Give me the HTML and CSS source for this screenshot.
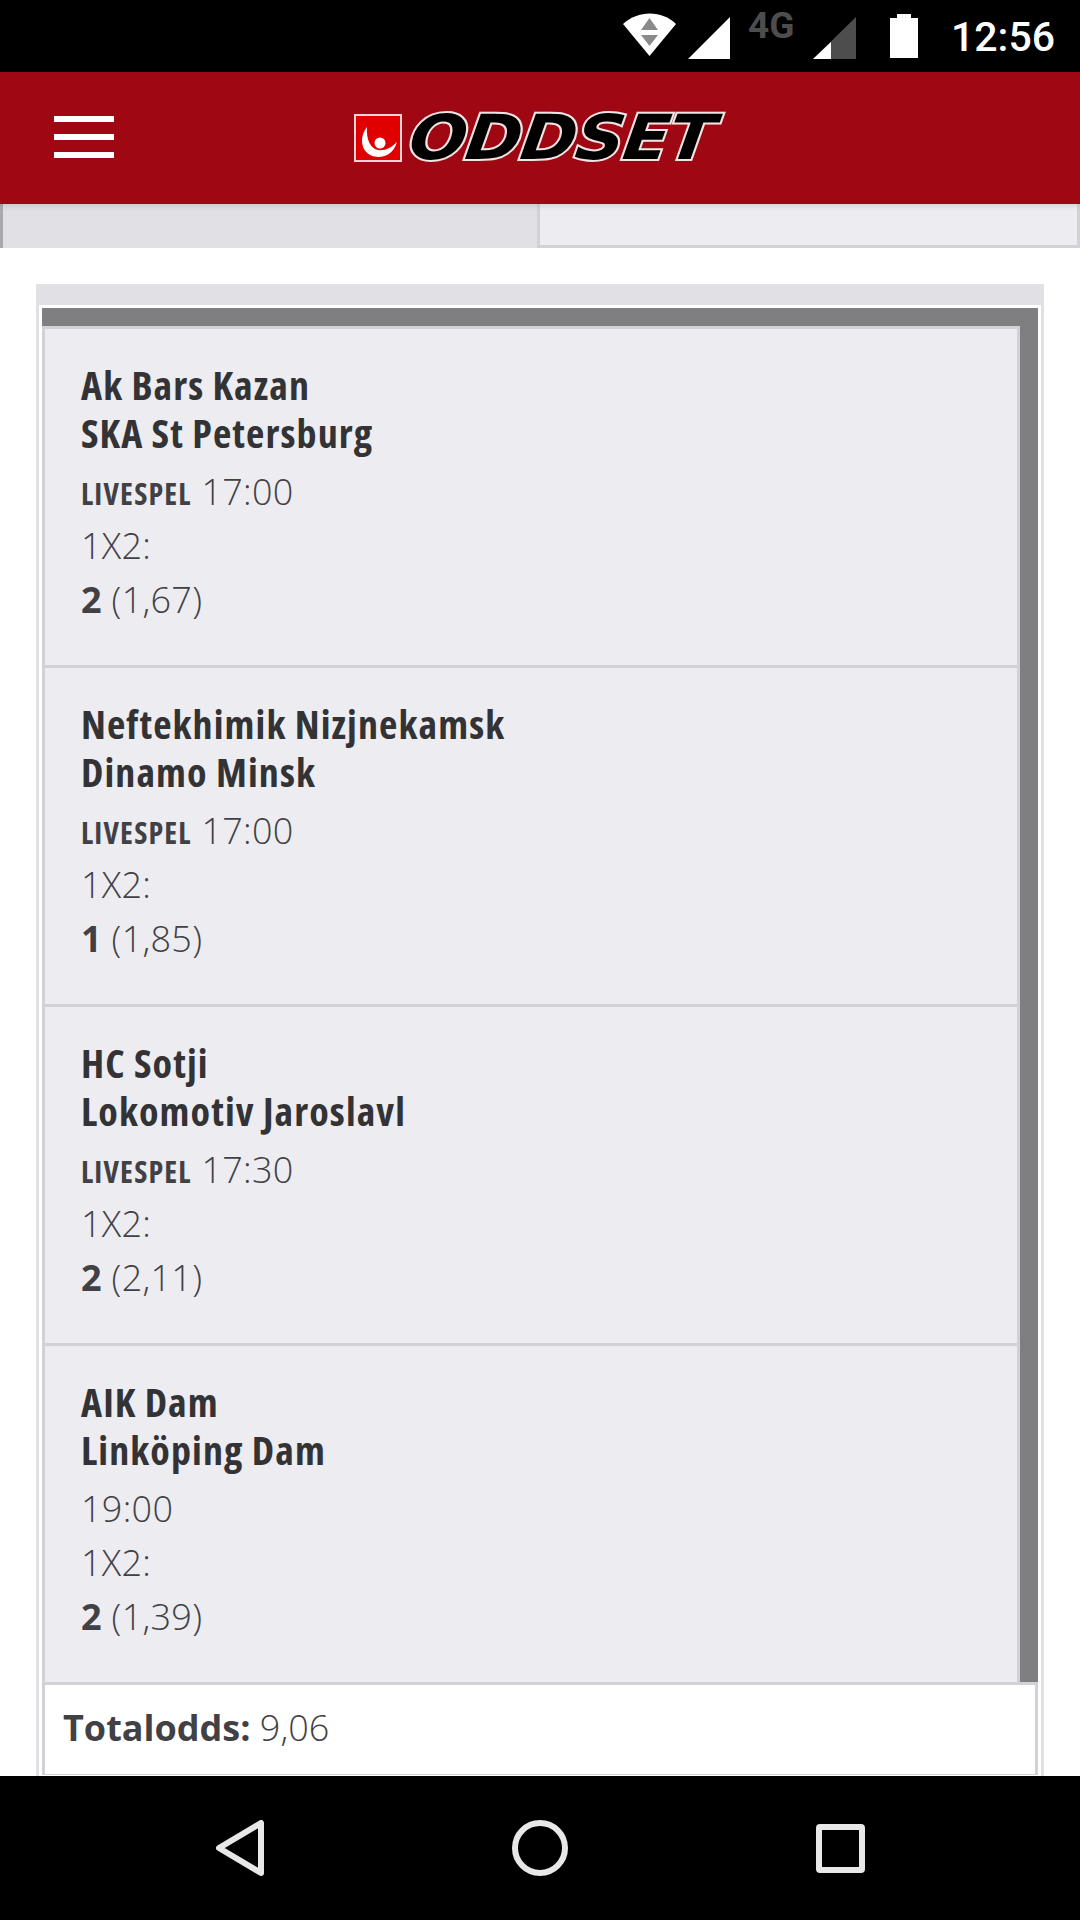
FILE: index.html
```html
<!DOCTYPE html>
<html lang="sv">
<head>
<meta charset="utf-8">
<title>Oddset</title>
<link rel="stylesheet" href="styles.css">
</head>
<body>
<div class="statusbar">
  <svg class="st-wifi" width="54" height="44" viewBox="0 0 54 44"><path d="M0 11C15-3 39-3 53 11L26.500 43Z" fill="#fff"/><path d="M26.500 5L35 17H18Z" fill="#8a8a8a"/><path d="M18 22H35L26.500 33Z" fill="#8a8a8a"/></svg>
  <svg class="st-sig1" width="42" height="42" viewBox="0 0 42 42"><path d="M42 0V42H0Z" fill="#fff"/></svg>
  <span class="st-net">4G</span>
  <svg class="st-sig2" width="43" height="42" viewBox="0 0 43 42"><path d="M43 0V42H0Z" fill="#4d4d4d"/><path d="M18 25V42H0Z" fill="#fff"/></svg>
  <svg class="st-batt" width="28" height="44" viewBox="0 0 28 44"><path d="M7 0H21V4H28V44H0V4H7Z" fill="#fff"/></svg>
  <span class="st-time">12:56</span>
</div>
<header class="appbar">
  <div class="burger"><i></i><i></i><i></i></div>
  <div class="logo">
    <svg class="logo-mark" width="48" height="48" viewBox="0 0 48 48"><rect x="1" y="1" width="46" height="46" fill="#e10000" stroke="#f3d5d5" stroke-width="2"/><path d="M13 13C4 24 7 42 24 43C33 43 40 38 43 28C37 34 31 37 24 36C17 35 12 26 13 13Z" fill="#fff"/><circle cx="26" cy="29" r="5.500" fill="#fff"/></svg>
    <span class="logo-word">ODDSET</span>
  </div>
</header>
<div class="tabs">
  <div class="tab tab-off"></div>
  <div class="tab tab-on"></div>
</div>
<main class="content">
  <section class="coupon">
    <div class="coupon-inner">
      <div class="bets">
        <article class="bet">
          <h2 class="teams">Ak Bars Kazan<br>SKA St Petersburg</h2>
          <p class="row"><b class="live">LIVESPEL</b> 17:00</p>
          <p class="row">1X2:</p>
          <p class="row"><b>2</b> (1,67)</p>
        </article>
        <article class="bet">
          <h2 class="teams">Neftekhimik Nizjnekamsk<br>Dinamo Minsk</h2>
          <p class="row"><b class="live">LIVESPEL</b> 17:00</p>
          <p class="row">1X2:</p>
          <p class="row"><b>1</b> (1,85)</p>
        </article>
        <article class="bet">
          <h2 class="teams">HC Sotji<br>Lokomotiv Jaroslavl</h2>
          <p class="row"><b class="live">LIVESPEL</b> 17:30</p>
          <p class="row">1X2:</p>
          <p class="row"><b>2</b> (2,11)</p>
        </article>
        <article class="bet">
          <h2 class="teams">AIK Dam<br>Linköping Dam</h2>
          <p class="row">19:00</p>
          <p class="row">1X2:</p>
          <p class="row"><b>2</b> (1,39)</p>
        </article>
      </div>
      <div class="total"><b>Totalodds:</b> 9,06</div>
    </div>
  </section>
</main>
<nav class="navbar">
  <svg width="48" height="56" viewBox="0 0 48 56"><path d="M45 3V53L3 28Z" fill="none" stroke="#e8e8e8" stroke-width="6" stroke-linejoin="round"/></svg>
  <svg width="56" height="56" viewBox="0 0 56 56"><circle cx="28" cy="28" r="25" fill="none" stroke="#e8e8e8" stroke-width="6"/></svg>
  <svg width="49" height="49" viewBox="0 0 49 49"><rect x="3" y="3" width="43" height="43" rx="1" fill="none" stroke="#e8e8e8" stroke-width="6"/></svg>
</nav>
</body>
</html>
```
FILE: styles.css
```css
* { box-sizing: border-box; }
html, body { margin: 0; padding: 0; }
body {
  width: 1080px;
  height: 1920px;
  overflow: hidden;
  display: flex;
  flex-direction: column;
  background: #fff;
  font-family: "Open Sans", sans-serif;
  color: #414145;
}
.statusbar {
  height: 72px;
  flex: none;
  background: #000;
  display: flex;
  align-items: flex-start;
  padding-left: 623px;
}
.st-wifi { margin-top: 13px; }
.st-sig1 { margin: 17px 0 0 11px; }
.st-net {
  margin: 4px 0 0 18px;
  width: 53px;
  font: 700 37px/44px Roboto, sans-serif;
  color: #4d4d4d;
}
.st-sig2 { margin: 17px 0 0 12px; }
.st-batt { margin: 14px 0 0 34px; }
.st-time {
  margin: 13px 0 0 33px;
  font: 500 41px/48px Roboto, sans-serif;
  color: #fff;
}
.appbar {
  height: 132px;
  flex: none;
  background: #9f0712;
  display: flex;
  align-items: center;
  padding-left: 354px;
  position: relative;
  z-index: 1;
  box-shadow: 0 2px 6px rgba(0,0,0,.12);
}
.burger {
  position: absolute;
  left: 54px;
  top: 44px;
  width: 60px;
  display: flex;
  flex-direction: column;
  gap: 12px;
}
.burger i { display: block; height: 6px; background: #fff; }
.logo { display: flex; align-items: center; gap: 8px; }
.logo-mark { flex: none; }
.logo-word {
  font: italic 700 62px/50px "DejaVu Sans", sans-serif;
  color: #000;
  -webkit-text-stroke: 4px #f2e4e4;
  paint-order: stroke fill;
  letter-spacing: -1px;
  display: inline-block;
  transform: skewX(-8deg) scaleX(1.09);
  transform-origin: left center;
  width: 315px;
}
.tabs { height: 44px; flex: none; display: flex; }
.tab-off { width: 537px; background: #e0e0e5; border-left: 3px solid #aaaaae; }
.tab-on { flex: 1; background: #edecf1; border: 3px solid #d2d2d6; border-top: 0; }
.content {
  flex: 1;
  min-height: 0;
  overflow: hidden;
  padding: 36px 36px 0;
}
.coupon {
  height: 100%;
  background: #fff;
  border: 3px solid #e0e0e5;
  border-top-width: 21px;
  border-bottom: 0;
  padding: 3px 3px 0;
}
.coupon-inner { height: 100%; }
.bets {
  background: #7f7f81;
  padding: 18px 18px 0 0;
}
.bet {
  height: 339px;
  background: #edecf1;
  border: 3px solid #d2d2d6;
  border-bottom: 0;
  padding: 32px 36px 0;
}
.teams {
  margin: 0 0 8px;
  font-stretch: condensed;
  font-weight: 700;
  font-size: 40px;
  letter-spacing: 1.100px;
  line-height: 48px;
  color: #333336;
}
.row {
  margin: 0;
  height: 54px;
  font-size: 36px;
  letter-spacing: .3px;
  line-height: 54px;
  font-weight: 300;
}
.row b { font-weight: 700; }
.row .live { font-stretch: condensed; font-size: 30px; letter-spacing: 1.200px; }
.total {
  height: 93px;
  background: #fff;
  border: 3px solid #d2d2d6;
  border-bottom-width: 1px;
  padding: 18px 18px 0;
  font-size: 36px;
  line-height: 50px;
  font-weight: 300;
}
.total b { font-weight: 700; }
.navbar {
  height: 144px;
  flex: none;
  background: #000;
  display: flex;
  align-items: center;
  padding-left: 216px;
  gap: 248px;
}
```
